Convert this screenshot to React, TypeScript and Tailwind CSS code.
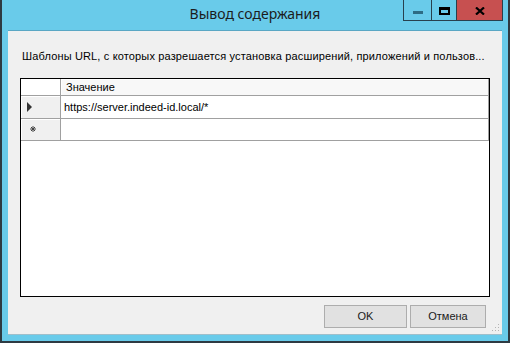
import { memo } from 'react'

const TitleButtons = memo(() => {
	return (
		<div className="absolute top-0 right-[5px] flex h-[21px] border-x border-b border-[#28414e]">
			<div className="flex w-[28px] items-center justify-center border-r border-[#28414e]">
				<div className="mt-[5px] h-[3px] w-[10px] bg-[#2d6c84]" />
			</div>
			<div className="flex w-[25px] items-center justify-center border-r border-[#28414e]">
				<div className="mt-[2px] h-[8px] w-[11px] border-2 border-t-[3px] border-black" />
			</div>
			<div className="flex w-[45px] items-center justify-center bg-[#c75050]">
				<svg width="10" height="8" viewBox="0 0 10 8" className="mt-[2px]">
					<path d="M1 0.5 L9 7.5 M9 0.5 L1 7.5" stroke="#000" strokeWidth="2.2" />
				</svg>
			</div>
		</div>
	)
})

const SizeGrip = () => (
	<svg width="8" height="8" viewBox="0 0 8 8" className="absolute right-[2px] bottom-[2px]">
		<g fill="#b4b4b4">
			<rect x="6" y="0" width="1" height="1" />
			<rect x="3" y="3" width="1" height="1" />
			<rect x="6" y="3" width="1" height="1" />
			<rect x="0" y="6" width="1" height="1" />
			<rect x="3" y="6" width="1" height="1" />
			<rect x="6" y="6" width="1" height="1" />
		</g>
	</svg>
)

const RowHeader = ({ children, h }: { children?: React.ReactNode; h: string }) => (
	<div className={`flex ${h} w-[40px] items-center border-r border-b border-[#a0a0a0] bg-[#f0f0f0] pl-[6px] shadow-[inset_1px_1px_0_#fff]`}>
		{children}
	</div>
)

export default function App() {
	return (
		<div className="flex h-[343px] w-[510px] flex-col border-x-2 border-b-2 border-[#2e3a42] bg-[#69cbea] font-['Liberation_Sans',Arial,sans-serif] text-[11px] text-black">
			<div className="relative h-[30px] shrink-0">
				<div className="pt-[4px] text-center font-['Noto_Sans',sans-serif] text-[14px] leading-[20px] text-[#1c1c1c]">
					Вывод содержания
				</div>
				<TitleButtons />
			</div>

			<div className="relative mx-[6px] flex h-[305px] flex-col border-y border-t-[#5aa7c4] border-b-[#9fbfcb] bg-[#f0f0f0]">
				<div className="truncate pt-[19px] pl-[14px] pr-[14px] leading-[13px] tracking-[0.15px] whitespace-nowrap">
					Шаблоны URL, с которых разрешается установка расширений, приложений и пользов...
				</div>

				<div className="mt-[15px] ml-[12px] flex h-[219px] w-[470px] flex-col border border-black bg-white">
					<div className="flex h-[17px]">
						<div className="h-full w-[40px] border-r border-b border-[#a0a0a0] bg-white" />
						<div className="flex h-full flex-1 items-center border-r border-b border-[#a0a0a0] bg-[#f8f8f8] pl-[5px] pt-[1px] shadow-[inset_1px_1px_0_#fff]">
							Значение
						</div>
					</div>
					<div className="flex">
						<RowHeader h="h-[23px]">
							<svg width="6" height="10" viewBox="0 0 6 10">
								<path d="M0 0 L5 5 L0 10 Z" fill="#333" />
							</svg>
						</RowHeader>
						<div className="flex h-[23px] flex-1 items-center border-r border-b border-[#a0a0a0] pl-[3px]">
							https://server.indeed-id.local/*
						</div>
					</div>
					<div className="flex">
						<RowHeader h="h-[22px]">
							<svg width="6" height="6" viewBox="0 0 6 6" className="ml-[3px] mb-[2px]">
								<path d="M3 0 L3 6 M0 3 L6 3 M1 1 L5 5 M5 1 L1 5" stroke="#444" strokeWidth="1" />
							</svg>
						</RowHeader>
						<div className="h-[22px] flex-1 border-r border-b border-[#a0a0a0]" />
					</div>
				</div>

				<div className="mt-[8px] flex justify-end gap-[3px] pr-[16px]">
					<button className="h-[23px] w-[83px] border border-[#adadad] bg-[#e1e1e1] text-[#1a1a1a]">OK</button>
					<button className="h-[23px] w-[76px] border border-[#adadad] bg-[#e1e1e1] text-[#1a1a1a]">Отмена</button>
				</div>

				<SizeGrip />
			</div>
		</div>
	)
}
